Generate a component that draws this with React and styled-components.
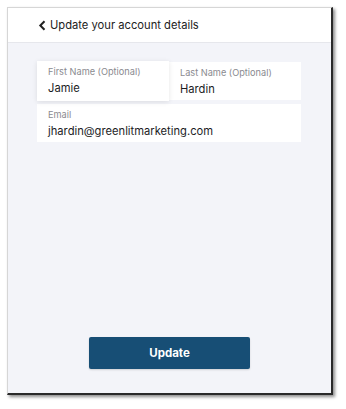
import React from "react";
import styled, { createGlobalStyle } from "styled-components";

const Global = createGlobalStyle`
  html, body { margin: 0; padding: 0; background: #ffffff; }
  body { font-family: Inter, "Liberation Sans", Arial, sans-serif; }
`;

const Page = styled.div`
  padding: 7px 0 0 7px;
  width: 346px;
  height: 409px;
  box-sizing: border-box;
`;

const Frame = styled.div`
  width: 326px;
  height: 388px;
  box-sizing: border-box;
  border-left: 1px solid #d6d6d6;
  border-top: 1px solid #d6d6d6;
  border-right: 2px solid #2a2a2a;
  border-bottom: 2px solid #2a2a2a;
  box-shadow: 2px 2px 3px rgba(0, 0, 0, 0.45);
  background: #f3f4f9;
  display: flex;
  flex-direction: column;
`;

const Header = styled.div`
  height: 34px;
  background: #ffffff;
  border-bottom: 1px solid #e6e7ec;
  display: flex;
  align-items: center;
  padding-left: 30px;
  gap: 3px;
  color: #222;
  font-size: 11.2px;
`;

const Body = styled.div`
  flex: 1;
  display: flex;
  flex-direction: column;
  padding: 18px 30px 24px 29px;
`;

const Fields = styled.div`
  display: grid;
  grid-template-columns: 132px 132px;
  row-gap: 2px;
`;

const Field = styled.div`
  background: #ffffff;
  padding: 5px 11px 0;
  height: ${(p) => (p.$focused ? 40 : 38)}px;
  box-sizing: border-box;
  grid-column: ${(p) => (p.$wide ? "1 / span 2" : "auto")};
  margin-top: ${(p) => (p.$focused ? 0 : 1)}px;
  box-shadow: ${(p) => (p.$focused ? "0 1px 5px rgba(0,0,0,0.10)" : "none")};
  position: relative;
  z-index: ${(p) => (p.$focused ? 1 : 0)};
`;

const Label = styled.div`
  font-size: 9.2px;
  color: #8a8a8f;
  line-height: 12px;
`;

const Value = styled.div`
  font-size: 11.2px;
  color: #1d1d1f;
  line-height: 17px;
  margin-top: 2px;
`;

const Spacer = styled.div`
  flex: 1;
`;

const Button = styled.button`
  align-self: center;
  width: 161px;
  height: 32px;
  margin-left: 1px;
  background: #174e75;
  color: #ffffff;
  border: none;
  border-radius: 2px;
  font-family: inherit;
  font-weight: 700;
  font-size: 11.5px;
  box-shadow: 0 1px 2px rgba(0, 0, 0, 0.15);
`;

const Chevron = () => (
  <svg width="9" height="11" viewBox="0 0 9 11">
    <path d="M6.5 1.2 L2.3 5.5 L6.5 9.8" fill="none" stroke="#222" strokeWidth="2" />
  </svg>
);

export default function App() {
  return (
    <>
      <Global />
      <Page>
        <Frame>
          <Header>
            <Chevron />
            <span>Update your account details</span>
          </Header>
          <Body>
            <Fields>
              <Field $focused>
                <Label>First Name (Optional)</Label>
                <Value>Jamie</Value>
              </Field>
              <Field>
                <Label>Last Name (Optional)</Label>
                <Value>Hardin</Value>
              </Field>
              <Field $wide>
                <Label>Email</Label>
                <Value>jhardin@greenlitmarketing.com</Value>
              </Field>
            </Fields>
            <Spacer />
            <Button>Update</Button>
          </Body>
        </Frame>
      </Page>
    </>
  );
}
